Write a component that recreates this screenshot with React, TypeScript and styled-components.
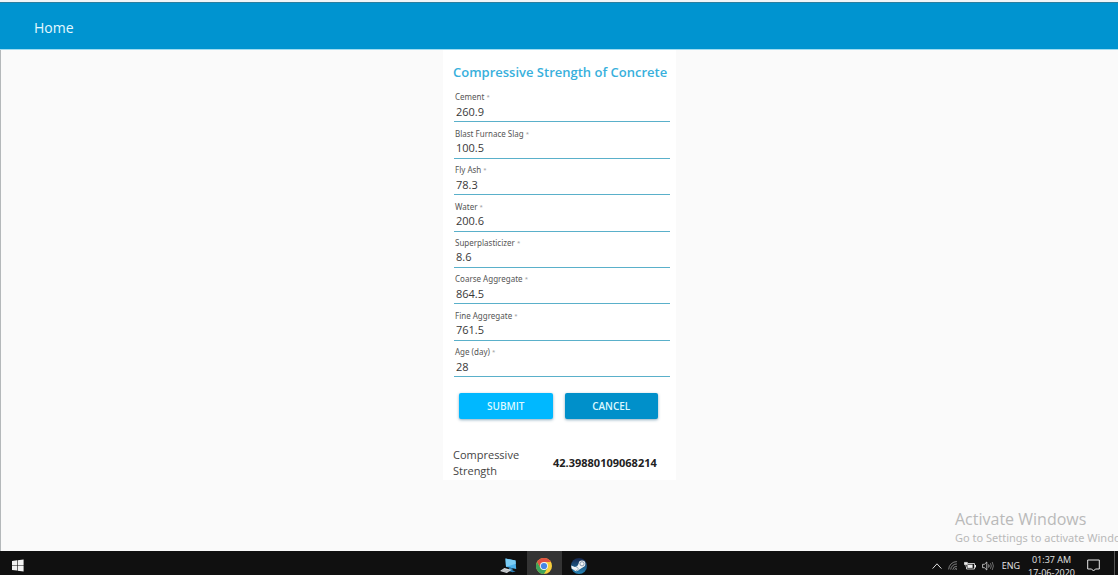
import React, { useState } from "react";
import styled, { createGlobalStyle } from "styled-components";

const GlobalStyle = createGlobalStyle`
  * { box-sizing: border-box; }
  body {
    margin: 0;
    background: #fafafa;
    font-family: "Open Sans", "Noto Sans", sans-serif;
    color: #333;
  }
`;

const Page = styled.div`
  position: relative;
  display: flex;
  flex-direction: column;
  min-height: 100vh;
  overflow: hidden;
  border-top: 2px solid #f0f5f7;
`;

const Header = styled.header`
  display: flex;
  align-items: center;
  height: 48px;
  padding: 4px 34px 0;
  background: #0094d0;
  border-top: 1px solid #2b7f9f;
  border-bottom: 1px solid #9fdcf0;
`;

const HomeLink = styled.a`
  color: #e4f9ff;
  font-size: 14px;
  line-height: 20px;
  text-decoration: none;
`;

const Main = styled.main`
  flex: 1;
  display: flex;
  justify-content: center;
  align-items: flex-start;
  border-left: 1px solid #b4b8ba;
`;

const Card = styled.section`
  width: 233px;
  padding: 12px 6px 1px 10px;
  background: #fff;
`;

const Title = styled.h1`
  margin: 0;
  color: #38b0dc;
  font-size: 13px;
  line-height: 20px;
  font-weight: 600;
  white-space: nowrap;
`;

const Fields = styled.div`
  display: grid;
  grid-auto-rows: 1fr;
  min-height: 291px;
  margin-top: 4px;
  padding-left: 1px;
`;

const Field = styled.div`
  display: flex;
  flex-direction: column;
  justify-content: flex-end;
`;

const Label = styled.label`
  padding-left: 1px;
  color: #555;
  font-family: "Noto Sans", "Open Sans", sans-serif;
  font-size: 8px;
  line-height: 12px;
`;

const Required = styled.sup`
  color: #999;
  font-size: 6px;
  line-height: 1;
  vertical-align: 1px;
`;

const Input = styled.input`
  width: 100%;
  height: 19px;
  padding: 0 2px 2px;
  border: 0;
  border-bottom: 1px solid #5ab0ca;
  outline: 0;
  background: transparent;
  color: #383838;
  font: 11px/16px "Open Sans", "Noto Sans", sans-serif;
`;

const Actions = styled.div`
  display: grid;
  grid-template-columns: 1fr 1fr;
  gap: 12px;
  margin-top: 16px;
  padding: 0 12px 0 6px;
`;

const Button = styled.button<{ $primary?: boolean }>`
  height: 26px;
  padding: 0;
  border: 0;
  border-radius: 2px;
  background: ${(p) => (p.$primary ? "#00b8ff" : "#0090ca")};
  box-shadow: 0 1px 3px rgba(0, 70, 110, 0.45);
  color: #dcf8ff;
  font: 600 10px/16px "Open Sans", "Noto Sans", sans-serif;
  text-transform: uppercase;
`;

const Result = styled.div`
  display: grid;
  grid-template-columns: 100px 1fr;
  align-items: center;
  margin-top: 28px;
  font-size: 11px;
  line-height: 16px;
  color: #444;
`;

const ResultLabel = styled.span`
  max-width: 80px;
`;

const Output = styled.output`
  color: #222;
  font-family: "Noto Sans", "Open Sans", sans-serif;
  font-weight: 700;
`;

const Watermark = styled.aside`
  position: absolute;
  right: -26px;
  bottom: 28px;
  width: 189px;
  color: #b9b9b9;
  white-space: nowrap;
`;

const WatermarkTitle = styled.div`
  font-size: 16px;
  line-height: 20px;
`;

const WatermarkText = styled.div`
  font-family: "Noto Sans", "Open Sans", sans-serif;
  font-size: 11px;
  line-height: 18px;
`;

const Taskbar = styled.footer`
  display: grid;
  grid-template-columns: 1fr auto 1fr;
  height: 24px;
  overflow: hidden;
  background: #101010;
  color: #e6e6e6;
`;

const StartArea = styled.div`
  display: flex;
  align-items: center;
  height: 29px;
  padding-left: 10px;
`;

const Apps = styled.div`
  display: flex;
  height: 29px;
  margin-right: 30px;
`;

const TaskButton = styled.button<{ $active?: boolean }>`
  display: flex;
  align-items: center;
  justify-content: center;
  min-width: 14px;
  padding: 0;
  border: 0;
  background: ${(p) => (p.$active ? "#343434" : "transparent")};
  color: inherit;
`;

const AppButton = styled(TaskButton)`
  width: 35px;
`;

const Tray = styled.div`
  display: flex;
  align-items: center;
  justify-content: flex-end;
  gap: 6px;
  height: 29px;
  padding-right: 3px;
`;

const Language = styled.span`
  margin-left: 2px;
  font-size: 9px;
  line-height: 12px;
`;

const Clock = styled.time`
  margin: 0 6px 0 2px;
  font-size: 9px;
  line-height: 13px;
  text-align: center;
  white-space: nowrap;
`;

const DesktopEdge = styled.i`
  width: 1px;
  height: 29px;
  margin-left: 8px;
  background: #555;
`;

const WindowsIcon = () => (
  <svg width="13" height="13" viewBox="0 0 13 13" fill="#f3f3f3">
    <path d="M1 2 6 1.3V6H1zM6.6 1.2 12.6.4V6H6.6zM1 6.6H6v5L1 11zM6.6 6.6h6v6L6.6 11.8z" />
  </svg>
);

const ComputerIcon = () => (
  <svg width="18" height="16" viewBox="0 0 18 16">
    <path d="M5.5.6 15.5 2.4 16.2 11 6 8.8z" fill="#4cb0ea" />
    <path d="M5.5.6 15.5 2.4l.3 3.4L6 8.8z" fill="#7bcdf5" />
    <path d="m9 9.6 3.6.8v2l3 .8-3 1-4-1.2z" fill="#2e80b5" />
    <path d="m4.4 10 7.2 1.8-4.8 3.2L0 13z" fill="#d8dde0" />
    <path d="m2 12.6 5.6 1.4M3.4 11.6l6 1.4" stroke="#999" strokeWidth=".5" />
  </svg>
);

const ChromeIcon = () => (
  <svg width="16" height="16" viewBox="0 0 16 16">
    <circle cx="8" cy="8" r="8" fill="#f8cf3d" />
    <path d="M8 8 4.5 10 1.07 4A8 8 0 0 1 14.93 4H8z" fill="#e05243" />
    <path d="M1.07 4A8 8 0 0 0 8 16l3.5-6L8 8l-3.5 2z" fill="#3fa45b" />
    <circle cx="8" cy="8" r="4" fill="#f4f4f4" />
    <circle cx="8" cy="8" r="3.1" fill="#4687e8" />
  </svg>
);

const SteamIcon = () => (
  <svg width="16" height="16" viewBox="0 0 16 16">
    <defs>
      <linearGradient id="steam" x1="0" y1="0" x2="0" y2="1">
        <stop offset="0" stopColor="#14244b" />
        <stop offset="1" stopColor="#2786b8" />
      </linearGradient>
    </defs>
    <circle cx="8" cy="8" r="8" fill="url(#steam)" />
    <path d="m.2 7.4 5 2 2.6-3.6 4.2 3.4-4 2.6-3 1.5L.6 10.6z" fill="#f0f3f5" />
    <circle cx="11" cy="5.8" r="3.4" fill="#f0f3f5" />
    <circle cx="11" cy="5.8" r="2.1" fill="none" stroke="#5c7590" strokeWidth=".7" />
    <circle cx="5.6" cy="10.8" r="2.4" fill="#f0f3f5" />
    <path d="M4.2 11.6a1.6 1.6 0 1 0 1.2-2.3" fill="none" stroke="#5c8099" strokeWidth=".6" />
  </svg>
);

const ChevronIcon = () => (
  <svg width="10" height="8" viewBox="0 0 10 8" fill="none" stroke="#ddd">
    <path d="m.6 6.6 4.4-4.8 4.4 4.8" />
  </svg>
);

const WifiIcon = () => (
  <svg width="10" height="11" viewBox="0 0 11 11" fill="none" stroke="#aaa" strokeWidth=".8">
    <path d="M.7 9.8A9 9 0 0 1 9.8 1.2M3 10A6.6 6.6 0 0 1 9.8 3.8M5.2 10.2a4.4 4.4 0 0 1 4.6-3.8M7.4 10.2a2 2 0 0 1 2.2-1.6" />
    <circle cx="9.2" cy="10" r=".5" fill="#eee" stroke="none" />
  </svg>
);

const BatteryIcon = () => (
  <svg width="12" height="10" viewBox="0 0 12 10" fill="none" stroke="#eee">
    <path d="M4 2.5h6.5v5.5h-8V5.5" strokeWidth=".8" />
    <path d="M11.5 4v2.5" />
    <path d="M3.4 3.6h5.2v3.3H3.4z" fill="#eee" stroke="none" />
    <path d="M.4 1.4h3v2.2h-3zM1.9 3.6v2" fill="#eee" strokeWidth=".7" />
  </svg>
);

const VolumeIcon = () => (
  <svg width="12" height="10" viewBox="0 0 12 10" fill="none" stroke="#ddd" strokeWidth=".8">
    <path d="M.6 3.3h1.8L4.8 1v8L2.4 6.7H.6z" />
    <path d="M6.6 3.5q1 1.5 0 3" />
    <path d="M8.4 2.2q1.8 2.8 0 5.6M10.2 1q2.4 4 0 8" stroke="#888" />
  </svg>
);

const NotificationIcon = () => (
  <svg width="13" height="13" viewBox="0 0 13 13" fill="none" stroke="#e6e6e6">
    <path d="M.7 1h11.6v9H8.4L6.5 12 4.6 10H.7z" />
  </svg>
);

const initialValues = [
  { id: "cement", label: "Cement", value: "260.9" },
  { id: "slag", label: "Blast Furnace Slag", value: "100.5" },
  { id: "fly-ash", label: "Fly Ash", value: "78.3" },
  { id: "water", label: "Water", value: "200.6" },
  { id: "superplasticizer", label: "Superplasticizer", value: "8.6" },
  { id: "coarse", label: "Coarse Aggregate", value: "864.5" },
  { id: "fine", label: "Fine Aggregate", value: "761.5" },
  { id: "age", label: "Age (day)", value: "28" },
];

export default function App() {
  const [fields, setFields] = useState(initialValues);
  const update = (id: string, value: string) =>
    setFields((all) => all.map((f) => (f.id === id ? { ...f, value } : f)));

  return (
    <>
      <GlobalStyle />
      <Page>
        <Header>
          <HomeLink href="#">Home</HomeLink>
        </Header>
        <Main>
          <Card>
            <Title>Compressive Strength of Concrete</Title>
            <form onSubmit={(e) => e.preventDefault()}>
              <Fields>
                {fields.map((f) => (
                  <Field key={f.id}>
                    <Label htmlFor={f.id}>
                      {f.label} <Required>*</Required>
                    </Label>
                    <Input
                      id={f.id}
                      required
                      value={f.value}
                      onChange={(e) => update(f.id, e.target.value)}
                    />
                  </Field>
                ))}
              </Fields>
              <Actions>
                <Button type="submit" $primary>Submit</Button>
                <Button type="button">Cancel</Button>
              </Actions>
            </form>
            <Result>
              <ResultLabel>Compressive Strength</ResultLabel>
              <Output>42.39880109068214</Output>
            </Result>
          </Card>
        </Main>
        <Taskbar>
          <StartArea>
            <TaskButton aria-label="Start"><WindowsIcon /></TaskButton>
          </StartArea>
          <Apps>
            <AppButton aria-label="Computer"><ComputerIcon /></AppButton>
            <AppButton aria-label="Chrome" $active><ChromeIcon /></AppButton>
            <AppButton aria-label="Steam"><SteamIcon /></AppButton>
          </Apps>
          <Tray>
            <ChevronIcon />
            <WifiIcon />
            <BatteryIcon />
            <VolumeIcon />
            <Language>ENG</Language>
            <Clock>
              01:37 AM
              <br />
              17-06-2020
            </Clock>
            <NotificationIcon />
            <DesktopEdge />
          </Tray>
        </Taskbar>
        <Watermark>
          <WatermarkTitle>Activate Windows</WatermarkTitle>
          <WatermarkText>Go to Settings to activate Windows.</WatermarkText>
        </Watermark>
      </Page>
    </>
  );
}
